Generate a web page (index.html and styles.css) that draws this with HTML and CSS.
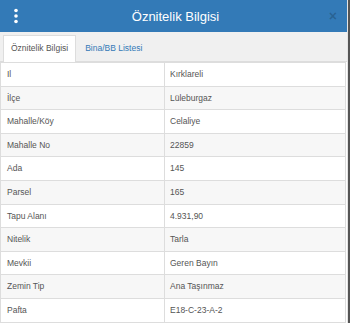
FILE: index.html
```html
<!DOCTYPE html>
<html lang="tr">
<head>
<meta charset="utf-8">
<link rel="stylesheet" href="styles.css">
</head>
<body>
<div class="frame">
  <div class="panel">
    <div class="header">
      <span class="menu">
        <svg width="4" height="16" viewBox="0 0 4 16"><circle cx="2" cy="2.5" r="1.8" fill="#fff"/><circle cx="2" cy="8" r="1.8" fill="#fff"/><circle cx="2" cy="13.5" r="1.8" fill="#fff"/></svg>
      </span>
      <span class="title">Öznitelik Bilgisi</span>
      <span class="close">×</span>
    </div>
    <div class="tabs">
      <span class="tab active">Öznitelik Bilgisi</span>
      <span class="tab link">Bina/BB Listesi</span>
    </div>
    <table class="attrs">
      <tbody>
        <tr><td class="k">Il</td><td>Kırklareli</td></tr>
        <tr class="alt"><td class="k">İlçe</td><td>Lüleburgaz</td></tr>
        <tr><td class="k">Mahalle/Köy</td><td>Celaliye</td></tr>
        <tr class="alt"><td class="k">Mahalle No</td><td>22859</td></tr>
        <tr><td class="k">Ada</td><td>145</td></tr>
        <tr class="alt"><td class="k">Parsel</td><td>165</td></tr>
        <tr><td class="k">Tapu Alanı</td><td>4.931,90</td></tr>
        <tr class="alt"><td class="k">Nitelik</td><td>Tarla</td></tr>
        <tr><td class="k">Mevkii</td><td>Geren Bayın</td></tr>
        <tr class="alt"><td class="k">Zemin Tip</td><td>Ana Taşınmaz</td></tr>
        <tr><td class="k">Pafta</td><td>E18-C-23-A-2</td></tr>
      </tbody>
    </table>
  </div>
  <div class="edge"></div>
</div>
</body>
</html>
```
FILE: styles.css
```css
html, body {
  margin: 0;
  padding: 0;
  background: #fff;
}
body {
  font-family: "Liberation Sans", Arial, sans-serif;
  color: #555;
  width: 350px;
  height: 323px;
  overflow: hidden;
}
.frame {
  display: flex;
  height: 323px;
}
.panel {
  width: 347px;
  background: #fff;
}
.edge {
  width: 2px;
  background: #555;
  border-left: 1px solid #e5e5e5;
}
.header {
  height: 32px;
  background: #337ab7;
  display: flex;
  align-items: center;
  padding: 0 10px 0 14px;
}
.menu {
  width: 20px;
  display: flex;
  align-items: center;
}
.menu svg { display: block; }
.title {
  flex: 1;
  text-align: center;
  color: #fff;
  font-size: 13px;
}
.close {
  width: 20px;
  text-align: right;
  font-size: 14px;
  font-weight: bold;
  color: rgba(0, 0, 0, 0.2);
}
.tabs {
  background: #f0f0f0;
  border-bottom: 1px solid #ddd;
  height: 26px;
  padding: 3px 0 0 3px;
  display: flex;
  align-items: flex-end;
}
.tab {
  font-size: 8.5px;
  height: 26px;
  line-height: 26px;
  padding: 0 7px;
  box-sizing: border-box;
}
.tab.active {
  background: #fff;
  color: #555;
  border: 1px solid #ddd;
  border-bottom: none;
  height: 27px;
  margin-bottom: -1px;
  line-height: 25px;
}
.tab.link {
  color: #337ab7;
  padding-left: 9px;
}
.attrs {
  border-collapse: collapse;
  width: 346px;
  margin-left: 0;
  font-size: 8.5px;
}
.attrs td {
  border: 1px solid #ddd;
  padding: 4px 5px;
  line-height: 14.6px;
  white-space: nowrap;
}
.attrs td.k {
  width: 152px;
  padding-left: 6px;
}
.attrs tr.alt td {
  background: #f7f7f7;
}
```
